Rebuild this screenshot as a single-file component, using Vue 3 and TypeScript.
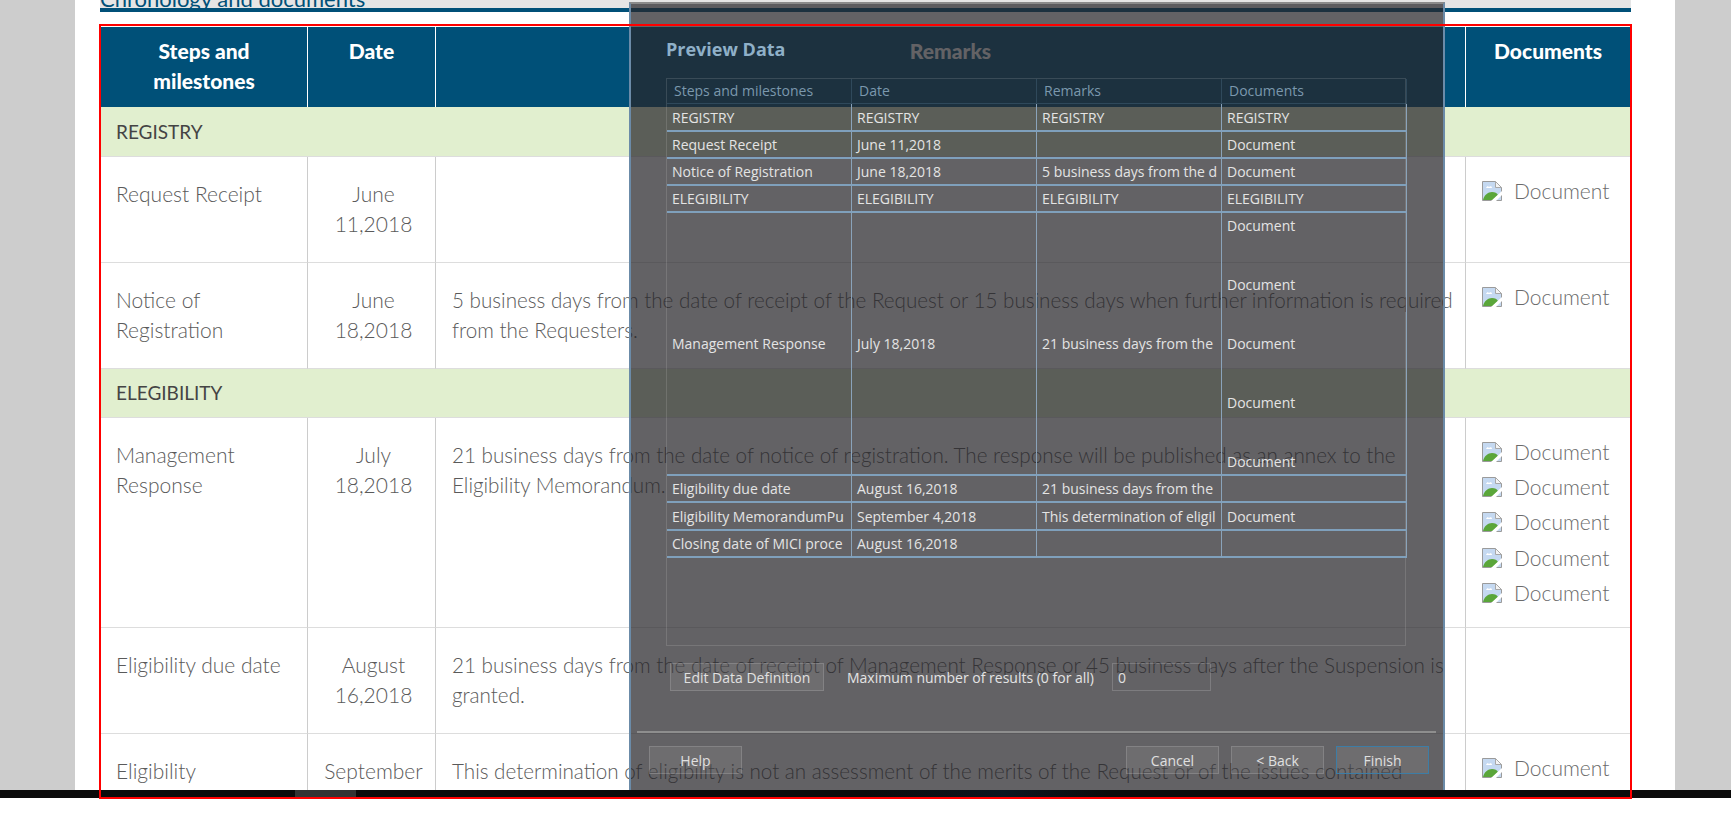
<template>
  <div class="screen">
    <main class="page">
      <div class="heading"><h2>Chronology and documents</h2></div>
      <table class="chrono">
        <colgroup>
          <col style="width: 207px" />
          <col style="width: 128px" />
          <col style="width: 1030px" />
          <col style="width: 164px" />
        </colgroup>
        <thead>
          <tr>
            <th>Steps and<br />milestones</th>
            <th>Date</th>
            <th>Remarks</th>
            <th>Documents</th>
          </tr>
        </thead>
        <tbody>
          <template v-for="row in rows" :key="row.step">
            <tr v-if="row.section" class="section">
              <td colspan="4" :style="{ height: row.height + 'px' }">{{ row.step }}</td>
            </tr>
            <tr v-else :style="{ height: row.height + 'px' }">
              <td class="step"><span v-for="l in row.stepLines" :key="l" class="line">{{ l }}</span></td>
              <td class="date"><span v-for="l in row.dateLines" :key="l" class="line">{{ l }}</span></td>
              <td class="remark"><span v-for="l in row.remarkLines" :key="l" class="line">{{ l }}</span></td>
              <td class="docs">
                <div v-for="n in row.docs" :key="n" class="doc">
                  <svg width="20" height="20" viewBox="0 0 20 20">
                    <path d="M.5.5h13l6 6v13H.5z" fill="#c5d9f1" stroke="#9b9b9b" />
                    <path d="M13.5.5v6h6z" fill="#f4f4f4" stroke="#a8a8a8" />
                    <path d="M4 7c1-2 2-2 3-1 1-1 3-1 3 1z" fill="#fff" />
                    <path d="M1 19c1-5 5-8 9-8 3 0 5 1 6 3l-5 5z" fill="#5aa63a" />
                    <path d="M9 20 20 10v4l-6 6z" fill="#fff" />
                  </svg>
                  <span>Document</span>
                </div>
              </td>
            </tr>
          </template>
        </tbody>
      </table>
    </main>

    <section class="dialog">
      <h3>Preview Data</h3>
      <div class="panel">
        <div class="grid head">
          <div v-for="h in previewHead" :key="h" class="hcell">{{ h }}</div>
        </div>
        <div v-for="(r, i) in preview" :key="i" class="grid prow" :style="{ height: r.height + 'px' }">
          <div v-for="(c, j) in r.cells" :key="j" class="pcell">
            <template v-if="Array.isArray(c)">
              <div class="stack"><span v-for="n in c" :key="n">Document</span></div>
            </template>
            <template v-else>{{ c }}</template>
          </div>
        </div>
      </div>
      <div class="options">
        <button class="btn edit">Edit Data Definition</button>
        <label class="maxlabel">Maximum number of results (0 for all)</label>
        <input class="maxinput" value="0" />
      </div>
      <hr class="sep" />
      <div class="actions">
        <button class="btn">Help</button>
        <div class="spacer"></div>
        <button class="btn">Cancel</button>
        <button class="btn">&lt; Back</button>
        <button class="btn primary">Finish</button>
      </div>
    </section>
  </div>
  <footer class="taskbar"><span class="task"></span></footer>
  <div class="frame"></div>
</template>

<script setup lang="ts">
interface Row {
  step: string
  section?: boolean
  height?: number
  stepLines?: string[]
  dateLines?: string[]
  remarkLines?: string[]
  docs?: number
}

const rows: Row[] = [
  { step: 'REGISTRY', section: true, height: 50 },
  { step: 'receipt', height: 106, stepLines: ['Request Receipt'], dateLines: ['June', '11,2018'], remarkLines: [], docs: 1 },
  {
    step: 'notice',
    height: 106,
    stepLines: ['Notice of', 'Registration'],
    dateLines: ['June', '18,2018'],
    remarkLines: [
      '5 business days from the date of receipt of the Request or 15 business days when further information is required',
      'from the Requesters.',
    ],
    docs: 1,
  },
  { step: 'ELEGIBILITY', section: true, height: 49 },
  {
    step: 'mgmt',
    height: 210,
    stepLines: ['Management', 'Response'],
    dateLines: ['July', '18,2018'],
    remarkLines: [
      '21 business days from the date of notice of registration. The response will be published as an annex to the',
      'Eligibility Memorandum.',
    ],
    docs: 5,
  },
  {
    step: 'due',
    height: 106,
    stepLines: ['Eligibility due date'],
    dateLines: ['August', '16,2018'],
    remarkLines: [
      '21 business days from the date of receipt of Management Response or 45 business days after the Suspension is',
      'granted.',
    ],
    docs: 0,
  },
  {
    step: 'memo',
    height: 106,
    stepLines: ['Eligibility'],
    dateLines: ['September'],
    remarkLines: ['This determination of eligibility is not an assessment of the merits of the Request or of the issues contained'],
    docs: 1,
  },
]

const previewHead = ['Steps and milestones', 'Date', 'Remarks', 'Documents']

const preview: { height: number; cells: (string | number[])[] }[] = [
  { height: 28, cells: ['REGISTRY', 'REGISTRY', 'REGISTRY', 'REGISTRY'] },
  { height: 27, cells: ['Request Receipt', 'June 11,2018', '', 'Document'] },
  { height: 27, cells: ['Notice of Registration', 'June 18,2018', '5 business days from the d', 'Document'] },
  { height: 27, cells: ['ELEGIBILITY', 'ELEGIBILITY', 'ELEGIBILITY', 'ELEGIBILITY'] },
  { height: 263, cells: ['Management Response', 'July 18,2018', '21 business days from the', [1, 2, 3, 4, 5]] },
  { height: 27, cells: ['Eligibility due date', 'August 16,2018', '21 business days from the', ''] },
  { height: 28, cells: ['Eligibility MemorandumPu', 'September 4,2018', 'This determination of eligil', 'Document'] },
  { height: 27, cells: ['Closing date of MICI proce', 'August 16,2018', '', ''] },
]
</script>

<style>
html,
body {
  margin: 0;
  height: 824px;
  overflow: hidden;
  background: #fff;
}
</style>

<style scoped>
.screen {
  position: relative;
  height: 790px;
  overflow: hidden;
  background: #cdcdcd;
  padding: 0 56px 0 75px;
  font-family: Lato, 'Open Sans', sans-serif;
}

.page {
  background: #fff;
  height: 100%;
  padding: 0 44px 0 25px;
  overflow: hidden;
}

.heading {
  height: 8px;
  background: #e5e5e5;
  border-bottom: 4px solid #005078;
  overflow: hidden;
  display: flex;
  align-items: flex-end;
}

.heading h2 {
  margin: 0 0 -3px;
  font-size: 22px;
  line-height: 24px;
  font-weight: 400;
  color: #005078;
  white-space: nowrap;
}

.chrono {
  margin: 15px 0 0 1px;
  width: 1529px;
  table-layout: fixed;
  border-collapse: separate;
  border-spacing: 0;
  font-size: 21px;
  line-height: 30px;
  font-weight: 300;
  color: #5a5a5a;
}

.chrono th {
  height: 80px;
  box-sizing: border-box;
  padding: 9px 8px 0;
  vertical-align: top;
  background: #005078;
  color: #fff;
  font-weight: 900;
  font-size: 21px;
  border-right: 1px solid #fff;
}

.chrono th:last-child,
.chrono td:last-child {
  border-right: 0;
}

.chrono td {
  box-sizing: border-box;
  vertical-align: top;
  padding: 22px 15px 0;
  border-right: 1px solid #ccc;
  border-bottom: 1px solid #ddd;
}

.chrono .section td {
  padding: 0 15px;
  vertical-align: middle;
  background: #e1efcf;
  color: #444;
  font-size: 19px;
  font-weight: 400;
  border-right: 0;
}

.line {
  display: block;
  white-space: nowrap;
}

.chrono td.date {
  text-align: center;
  padding-left: 4px;
  padding-right: 0;
}

.chrono td.remark {
  padding-left: 16px;
  padding-right: 0;
  font-size: 20.65px;
}

.chrono td.docs {
  padding: 16px 0 0 16px;
}

.doc {
  display: flex;
  align-items: center;
  gap: 12px;
  height: 35.4px;
  color: #6b6b6b;
}

.dialog {
  position: absolute;
  left: 629px;
  top: 2px;
  width: 816px;
  height: 788px;
  box-sizing: border-box;
  padding: 0 35px;
  background: rgba(39, 38, 42, 0.72);
  border-left: 2px solid #6b8ba8;
  border-right: 2px solid #6b8ba8;
  border-top: 2px solid #8a8a8a;
  font-family: 'Open Sans', sans-serif;
  font-size: 14px;
  color: #e4e4e4;
}

.dialog h3 {
  margin: 0;
  height: 74px;
  box-sizing: border-box;
  padding-top: 33px;
  font-size: 18px;
  line-height: 24px;
  font-weight: 700;
  color: #8fb0c8;
}

.panel {
  width: 740px;
  height: 568px;
  box-sizing: border-box;
  border: 1px solid rgba(255, 255, 255, 0.13);
}

.grid {
  display: grid;
  grid-template-columns: repeat(4, 185px);
}

.head {
  height: 25px;
}

.hcell {
  padding-left: 7px;
  line-height: 24px;
  color: #7b98ad;
  border-right: 1px solid rgba(120, 160, 190, 0.22);
  border-bottom: 1px solid rgba(120, 160, 190, 0.22);
}

.pcell {
  display: flex;
  align-items: center;
  box-sizing: border-box;
  padding-left: 5px;
  white-space: nowrap;
  overflow: hidden;
  border-right: 1px solid #8aa3ba;
  border-bottom: 2px solid #7fa0bc;
}

.stack {
  display: flex;
  flex-direction: column;
  align-self: flex-start;
  gap: 39px;
  padding-top: 3px;
  line-height: 20px;
}

.options {
  display: flex;
  align-items: center;
  margin: 17px 0 0 4px;
}

.btn {
  height: 28px;
  width: 93px;
  box-sizing: border-box;
  padding: 0;
  background: rgba(255, 255, 255, 0.07);
  border: 1px solid rgba(255, 255, 255, 0.15);
  font: inherit;
  color: #e0e0e0;
  white-space: nowrap;
}

.edit {
  width: 154px;
}

.maxlabel {
  margin-left: 23px;
  width: 247px;
  white-space: nowrap;
}

.maxinput {
  margin-left: 18px;
  width: 99px;
  height: 28px;
  box-sizing: border-box;
  padding: 0 5px;
  background: transparent;
  border: 1px solid rgba(255, 255, 255, 0.17);
  font: inherit;
  color: #e0e0e0;
}

.sep {
  margin: 40px 0 0 -29px;
  width: 799px;
  height: 2px;
  border: 0;
  background: #8e8e8e;
}

.actions {
  display: flex;
  gap: 12px;
  margin: 13px 0 0 -17px;
  width: 780px;
}

.spacer {
  flex: 1;
}

.primary {
  border-color: #3d7da6;
}

.taskbar {
  height: 8px;
  background: linear-gradient(90deg, #0b0b0b 50%, #0a1620 58%, #0b0b0b 64%);
  padding-left: 295px;
}

.task {
  display: block;
  width: 61px;
  height: 8px;
  background: #333;
}

.frame {
  position: absolute;
  left: 99px;
  top: 24px;
  width: 1533px;
  height: 775px;
  box-sizing: border-box;
  border: 2px solid #f00;
  pointer-events: none;
}
</style>
